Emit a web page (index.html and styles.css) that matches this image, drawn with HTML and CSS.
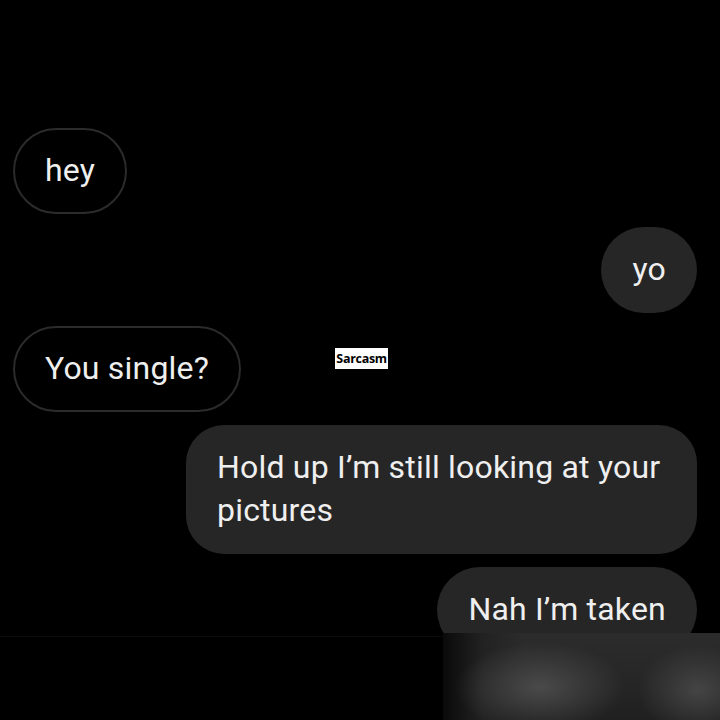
FILE: index.html
```html
<!DOCTYPE html>
<html>
<head>
<meta charset="utf-8">
<link rel="stylesheet" href="styles.css">
</head>
<body>
<div class="screen">
  <div class="chat">
    <div class="msg in">hey</div>
    <div class="msg out">yo</div>
    <div class="row">
      <div class="msg in">You single?</div>
      <span class="tag">Sarcasm</span>
    </div>
    <div class="msg out wide">Hold up I’m still looking at your pictures</div>
    <div class="msg out">Nah I’m taken</div>
  </div>
  <div class="footer">
    <div class="footer-left"></div>
    <div class="footer-right"></div>
  </div>
</div>
</body>
</html>
```
FILE: styles.css
```css
html, body {
  margin: 0;
  padding: 0;
  background: #000;
}
.screen {
  width: 720px;
  height: 720px;
  display: flex;
  flex-direction: column;
  background: #000;
  overflow: hidden;
}
.chat {
  height: 633px;
  flex: none;
  overflow: hidden;
  display: flex;
  flex-direction: column;
  gap: 13px;
  padding: 128px 23px 0 13px;
  box-sizing: border-box;
  font-family: Roboto, "Noto Sans", sans-serif;
}
.msg {
  box-sizing: border-box;
  font-size: 32px;
  letter-spacing: 0.2px;
  line-height: 43px;
  color: #efefef;
  padding: 21px 31px 22px;
  border-radius: 43px;
  flex: none;
}
.msg.in {
  align-self: flex-start;
  border: 2px solid #2b2b2b;
  padding: 19px 30px 20px;
}
.msg.out {
  align-self: flex-end;
  background: #262626;
}
.msg.wide {
  max-width: 511px;
  border-radius: 38px;
}
.row {
  display: flex;
  align-items: flex-start;
  gap: 94px;
}
.tag {
  margin-top: 22px;
  background: #fff;
  color: #000;
  font-family: "Open Sans", "Liberation Sans", sans-serif;
  font-weight: 700;
  font-size: 12.5px;
  letter-spacing: -0.3px;
  line-height: 21px;
  width: 53px;
  box-sizing: border-box;
  text-align: center;
}
.footer {
  flex: 1;
  display: flex;
}
.footer-left {
  width: 443px;
  background: #000;
  border-top: 1px solid #0a0d0a;
  margin-top: 3px;
}
.footer-right {
  flex: 1;
  background:
    radial-gradient(ellipse 85px 45px at 97px 54px, rgba(78,78,78,0.9), rgba(78,78,78,0) 100%),
    radial-gradient(ellipse 60px 45px at 255px 57px, rgba(72,72,72,0.9), rgba(72,72,72,0) 100%),
    linear-gradient(90deg, #0a0a0a 0px, #222 40px, rgba(34,34,34,0) 80px),
    linear-gradient(180deg, #2c2c2c 0%, #282828 40%, #202020 100%);
}
```
